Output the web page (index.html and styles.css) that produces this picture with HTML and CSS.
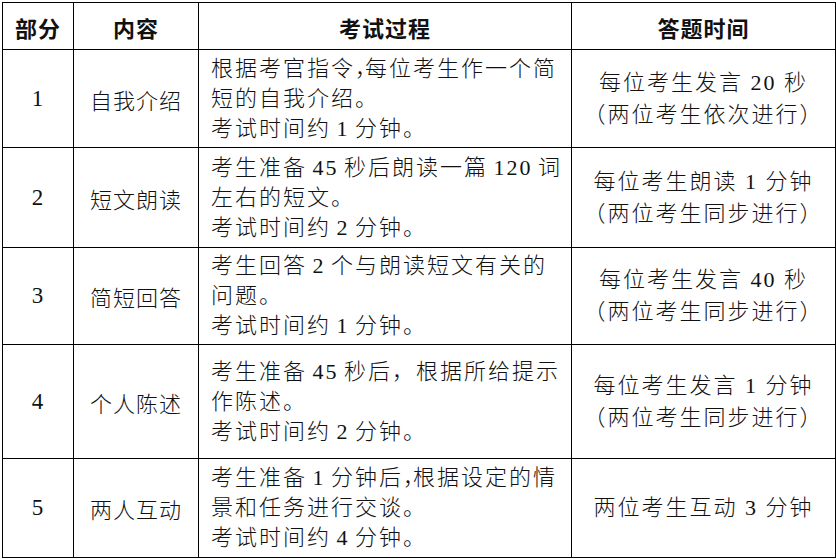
FILE: index.html
```html
<!DOCTYPE html>
<html lang="zh-CN">
<head>
<meta charset="utf-8">
<title>考试流程</title>
<link rel="stylesheet" href="styles.css">
</head>
<body>
<table class="exam">
  <colgroup>
    <col class="c1"><col class="c2"><col class="c3"><col class="c4">
  </colgroup>
  <thead>
    <tr class="head">
      <th>部分</th>
      <th>内容</th>
      <th>考试过程</th>
      <th>答题时间</th>
    </tr>
  </thead>
  <tbody>
    <tr class="r1">
      <td class="num">1</td>
      <td class="name">自我介绍</td>
      <td class="proc">根据考官指令<span class="half">，</span>每位考生作一个简<br>短的自我介绍。<br>考试时间约 1 分钟。</td>
      <td class="time">每位考生发言 20 秒<br>（两位考生依次进行）</td>
    </tr>
    <tr class="r2">
      <td class="num">2</td>
      <td class="name">短文朗读</td>
      <td class="proc">考生准备 45 秒后朗读一篇 120 词<br>左右的短文。<br>考试时间约 2 分钟。</td>
      <td class="time">每位考生朗读 1 分钟<br>（两位考生同步进行）</td>
    </tr>
    <tr class="r3">
      <td class="num">3</td>
      <td class="name">简短回答</td>
      <td class="proc">考生回答 2 个与朗读短文有关的<br>问题。<br>考试时间约 1 分钟。</td>
      <td class="time">每位考生发言 40 秒<br>（两位考生同步进行）</td>
    </tr>
    <tr class="r4">
      <td class="num">4</td>
      <td class="name">个人陈述</td>
      <td class="proc">考生准备 45 秒后，根据所给提示<br>作陈述。<br>考试时间约 2 分钟。</td>
      <td class="time">每位考生发言 1 分钟<br>（两位考生同步进行）</td>
    </tr>
    <tr class="r5">
      <td class="num">5</td>
      <td class="name">两人互动</td>
      <td class="proc">考生准备 1 分钟后<span class="half">，</span>根据设定的情<br>景和任务进行交谈。<br>考试时间约 4 分钟。</td>
      <td class="time">两位考生互动 3 分钟</td>
    </tr>
  </tbody>
</table>
</body>
</html>
```

FILE: styles.css
```css
html, body {
  margin: 0;
  padding: 0;
  background: #ffffff;
}

body {
  padding: 2px 0 0 2px;
  font-family: "Liberation Serif", "Noto Sans CJK SC", serif;
  color: #111111;
}

.exam {
  border-collapse: collapse;
  table-layout: fixed;
  width: 833px;
  font-size: 22px;
  letter-spacing: 1px;
}

.c1 { width: 71px; }
.c2 { width: 125px; }
.c3 { width: 373px; }
.c4 { width: 264px; }

.exam th,
.exam td {
  border: 1.5px solid #000000;
  padding: 0;
  vertical-align: middle;
  white-space: nowrap;
  overflow: hidden;
}

.head { height: 47px; }
.head th {
  font-family: "Noto Sans CJK SC", sans-serif;
  font-weight: 700;
  font-size: 22px;
  text-align: center;
  padding-top: 1px;
}

.r1 { height: 98px; }
.r2 { height: 100px; }
.r3 { height: 97px; }
.r4 { height: 114px; }
.r5 { height: 99px; }

.num {
  text-align: center;
  font-size: 23px;
}

.name {
  text-align: center;
  font-weight: 300;
}

.proc {
  text-align: left;
  padding-left: 12px !important;
  line-height: 30px;
  font-weight: 300;
  letter-spacing: 2px;
  word-spacing: -2px;
}

.time {
  text-align: center;
  line-height: 32px;
  font-weight: 300;
  letter-spacing: 2px;
}

.half {
  letter-spacing: -12px;
}
```
